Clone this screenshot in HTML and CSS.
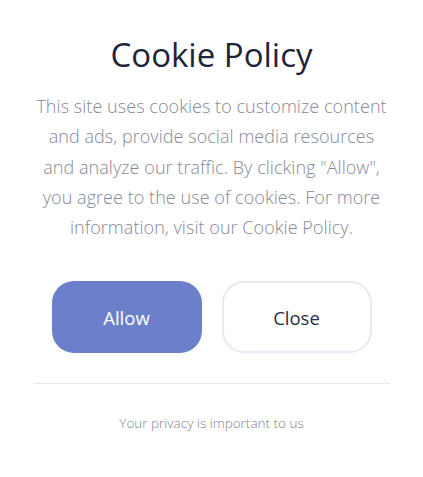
FILE: index.html
```html
<!DOCTYPE html>
<html>
<head>
<meta charset="utf-8">
<link rel="stylesheet" href="styles.css">
</head>
<body>
<div class="card">
  <h1 class="title">Cookie Policy</h1>
  <p class="text">This site uses cookies to customize content and ads, provide social media resources and analyze our traffic. By clicking "Allow", you agree to the use of cookies. For more information, visit our Cookie Policy.</p>
  <div class="actions">
    <button class="btn btn-allow">Allow</button>
    <button class="btn btn-close">Close</button>
  </div>
  <div class="divider"></div>
  <p class="footer">Your privacy is important to us</p>
</div>
</body>
</html>
```
FILE: styles.css
```css
html, body {
  margin: 0;
  padding: 0;
  background: #ffffff;
}
body {
  font-family: "Open Sans", "Noto Sans", sans-serif;
}
.card {
  width: 423px;
  box-sizing: border-box;
  padding: 30px 33px 0;
  display: flex;
  flex-direction: column;
  align-items: center;
}
.title {
  margin: 0;
  font-size: 33px;
  font-weight: 400;
  line-height: 50px;
  color: #1e2538;
}
.text {
  margin: 11px 0 0;
  font-size: 18px;
  font-weight: 300;
  line-height: 30.25px;
  color: #868a9a;
  text-align: center;
  letter-spacing: 0.05px;
}
.actions {
  display: flex;
  gap: 20px;
  margin-top: 39px;
}
.btn {
  width: 150px;
  height: 72px;
  border-radius: 22px;
  font-family: inherit;
  font-size: 18.5px;
  font-weight: 400;
  cursor: pointer;
  box-sizing: border-box;
}
.btn-allow {
  background: #6b7fcb;
  border: none;
  color: #ffffff;
}
.btn-close {
  background: #ffffff;
  border: 2px solid #e4e9f2;
  color: #2a3040;
}
.divider {
  align-self: stretch;
  height: 1px;
  background: #e8e8ea;
  margin-top: 30px;
}
.footer {
  margin: 30px 0 0;
  font-size: 13.5px;
  font-weight: 300;
  color: #80828c;
}
```
